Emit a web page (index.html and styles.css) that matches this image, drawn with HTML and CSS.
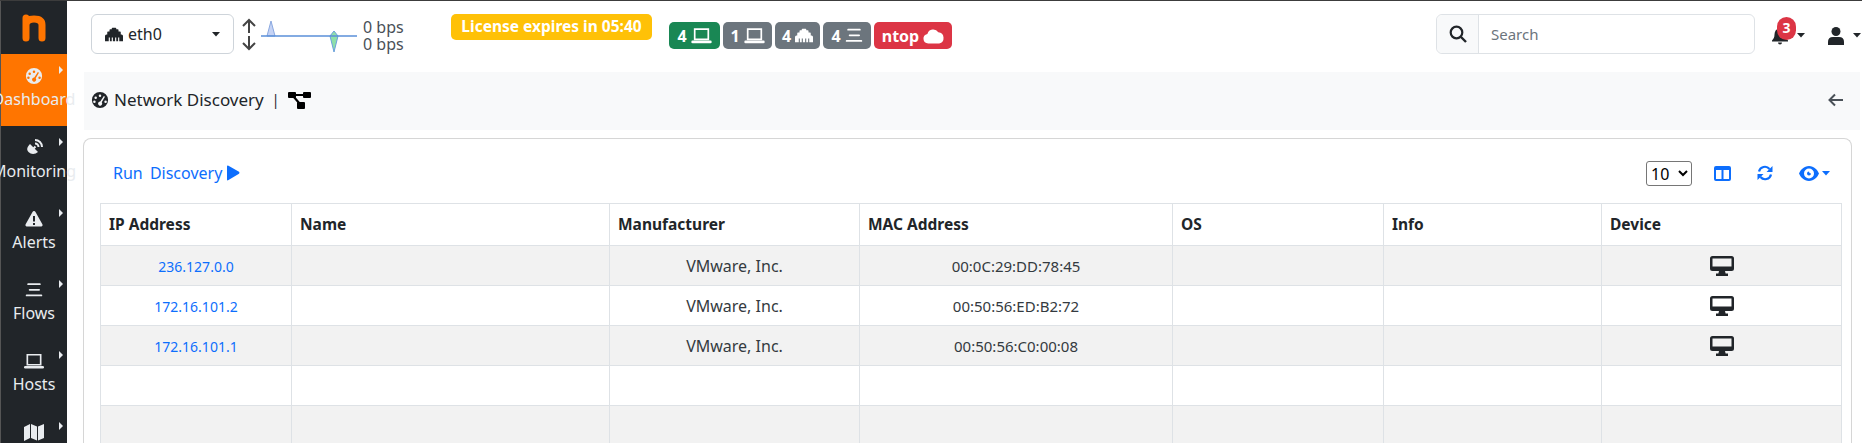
FILE: index.html
```html
<!DOCTYPE html>
<html lang="en">
<head>
    <meta charset="UTF-8">
    <meta name="viewport" content="width=device-width, initial-scale=1.0">
    <title>Network Discovery</title>
    <link rel="stylesheet" href="styles.css">
</head>
<body>
    <!-- Shared icons -->
    <svg class="defs" aria-hidden="true">
        <symbol id="i-laptop" viewBox="0 0 24 20">
            <path d="M4 2.500h16v12H4z" fill="none" stroke="currentColor" stroke-width="2"/>
            <rect x="0" y="16" width="24" height="3" rx="1.500" fill="currentColor"/>
        </symbol>
        <symbol id="i-ethernet" viewBox="0 0 24 20">
            <path d="M0 19v-7q0-2 2-2h1V7q0-1 1-1h2V4q0-1 1-1h2V2q0-1 1-1h4q1 0 1 1v1h2q1 0 1 1v2h2q1 0 1 1v3h1q2 0 2 2v7zM5 14v5h1.500v-5zM9 14v5h1.500v-5zM13.500 14v5H15v-5zM17.500 14v5H19v-5z" fill="currentColor" fill-rule="evenodd"/>
        </symbol>
        <symbol id="i-bars" viewBox="0 0 24 20">
            <rect x="3" y="1" width="18" height="2.400" rx="1.200" fill="currentColor"/>
            <rect x="5" y="8.500" width="15" height="2.400" rx="1.200" fill="currentColor"/>
            <rect x="1" y="16" width="22" height="2.400" rx="1.200" fill="currentColor"/>
        </symbol>
        <symbol id="i-cloud" viewBox="0 0 24 18">
            <path d="M6 17.500a5.500 5.500 0 0 1-1-10.900A7 7 0 0 1 17.500 4.700 6.500 6.500 0 0 1 18.500 17.500z" fill="currentColor"/>
        </symbol>
        <symbol id="i-gauge" viewBox="0 0 20 20">
            <path d="M10 1a9 9 0 1 0 0 18 9 9 0 0 0 0-18zM10 4a1.400 1.400 0 1 1 0 2.800A1.400 1.400 0 0 1 10 4zM5.200 6a1.400 1.400 0 1 1 0 2.800 1.400 1.400 0 0 1 0-2.800zM3.800 10.500a1.400 1.400 0 1 1 0 2.800 1.400 1.400 0 0 1 0-2.800zM16.200 10.500a1.400 1.400 0 1 1 0 2.800 1.400 1.400 0 0 1 0-2.800zM14.300 5.500l1.200.8-3.600 6.200a2.300 2.300 0 1 1-1.600-.8z" fill="currentColor" fill-rule="evenodd"/>
        </symbol>
        <symbol id="i-desktop" viewBox="0 0 24 20">
            <path d="M2.500 0h19A2.500 2.500 0 0 1 24 2.500v10a2.500 2.500 0 0 1-2.500 2.500H15l.6 2.500H18V20H6v-2.500h2.400L9 15H2.500A2.500 2.500 0 0 1 0 12.500v-10A2.500 2.500 0 0 1 2.500 0zM2.500 2.500v8h19v-8z" fill="currentColor" fill-rule="evenodd"/>
        </symbol>
        <symbol id="i-caret" viewBox="0 0 10 6">
            <path d="M0 0h10L5 5.500z" fill="currentColor"/>
        </symbol>
    </svg>

    <div class="layout">
        <!-- Sidebar -->
        <nav class="sidebar">
            <div class="logo">
                <svg width="26" height="28" viewBox="0 0 26 28"><path d="M5 4v20M5 11q0-6 8-6t8 6v13" fill="none" stroke="#ff7500" stroke-width="7" stroke-linecap="round"/></svg>
            </div>
            <a class="nav-item active">
                <svg class="nav-icon" width="18" height="18"><use href="#i-gauge"/></svg>
                <span>Dashboard</span>
            </a>
            <a class="nav-item">
                <svg class="nav-icon" width="18" height="18" viewBox="0 0 18 18"><path d="M5 5l8 8c-3 2.500-7 2.500-9.500 0S2.500 7.500 5 5z" fill="currentColor"/><path d="M8.500 9.500l2-2" stroke="currentColor" stroke-width="2"/><path d="M10 4.500a3.500 3.500 0 0 1 3.500 3.500M10 1a7 7 0 0 1 7 7" fill="none" stroke="currentColor" stroke-width="2"/></svg>
                <span>Monitoring</span>
            </a>
            <a class="nav-item">
                <svg class="nav-icon" width="18" height="18" viewBox="0 0 18 18"><path d="M9 1q1 0 1.500 1l7 12.500q.5 1.500-1 2H1.500q-1.500-.5-1-2l7-12.500Q8 1 9 1zM8 6v5.500h2V6zM8 13v2h2v-2z" fill="currentColor" fill-rule="evenodd"/></svg>
                <span>Alerts</span>
            </a>
            <a class="nav-item">
                <svg class="nav-icon" width="18" height="18"><use href="#i-bars"/></svg>
                <span>Flows</span>
            </a>
            <a class="nav-item">
                <svg class="nav-icon" width="20" height="18"><use href="#i-laptop"/></svg>
                <span>Hosts</span>
            </a>
            <a class="nav-item partial">
                <svg class="nav-icon" width="20" height="18" viewBox="0 0 20 18"><path d="M0 4l6-3v14l-6 3zM7 1l6 2.500v14L7 15zM14 3.500L20 1v14l-6 2.500z" fill="currentColor"/></svg>
            </a>
        </nav>

        <div class="main">
            <!-- Top bar -->
            <header class="topbar">
                <div class="iface-select">
                    <svg width="18" height="15"><use href="#i-ethernet"/></svg>
                    <span class="iface-name">eth0</span>
                    <svg class="iface-caret" width="8" height="5"><use href="#i-caret"/></svg>
                </div>
                <svg class="updown" width="16" height="33" viewBox="0 0 16 33"><path d="M8 15V2M2 8l6-6 6 6M8 18v13M2 25l6 6 6-6" fill="none" stroke="#444" stroke-width="2"/></svg>
                <svg class="spark" width="96" height="34" viewBox="0 0 96 34">
                    <path d="M6 16L10 1l4 15z" fill="#c5d3f5" stroke="#8aa8e0"/>
                    <path d="M69 16l4-5 4 5-4 16z" fill="#8fe0a8" stroke="#6a9fdc"/>
                    <path d="M0 16h96" stroke="#5a8fd8" stroke-width="1.500"/>
                </svg>
                <div class="bps"><div>0 bps</div><div>0 bps</div></div>
                <div class="license">License expires in 05:40</div>
                <div class="badges">
                    <span class="badge green">4 <svg width="21" height="17"><use href="#i-laptop"/></svg></span>
                    <span class="badge gray">1 <svg width="21" height="17"><use href="#i-laptop"/></svg></span>
                    <span class="badge gray">4 <svg width="18" height="15"><use href="#i-ethernet"/></svg></span>
                    <span class="badge gray">4 <svg width="18" height="15"><use href="#i-bars"/></svg></span>
                    <span class="badge red">ntop <svg width="21" height="16"><use href="#i-cloud"/></svg></span>
                </div>
                <div class="search">
                    <div class="search-addon">
                        <svg width="18" height="18" viewBox="0 0 18 18"><circle cx="7.500" cy="7.500" r="5.800" fill="none" stroke="#212529" stroke-width="2.200"/><path d="M12 12l5 5" stroke="#212529" stroke-width="2.400"/></svg>
                    </div>
                    <div class="search-input">Search</div>
                </div>
                <div class="bell">
                    <svg width="16" height="18" viewBox="0 0 16 18"><path d="M8 0q1 0 1 1.200C12 2 13.500 4.500 13.500 7.500c0 3 1 4.500 2.500 6v1H0v-1C1.500 12 2.500 10.500 2.500 7.500 2.500 4.500 4 2 7 1.200 7 0 8 0 8 0zM6 15.500h4a2 2 0 0 1-4 0z" fill="#212529"/></svg>
                    <span class="bell-count">3</span>
                    <svg width="8" height="5"><use href="#i-caret"/></svg>
                </div>
                <div class="user">
                    <svg width="16" height="18" viewBox="0 0 16 18"><circle cx="8" cy="4.500" r="4.500" fill="#212529"/><path d="M0 18v-3q0-5 5-5h6q5 0 5 5v3z" fill="#212529"/></svg>
                    <svg width="8" height="5"><use href="#i-caret"/></svg>
                </div>
            </header>

            <!-- Breadcrumb -->
            <div class="crumb">
                <svg class="crumb-gauge" width="18" height="18"><use href="#i-gauge"/></svg>
                <span class="crumb-title">Network Discovery</span>
                <span class="crumb-sep">|</span>
                <svg width="23" height="18" viewBox="0 0 23 18"><rect x="0" y="1" width="8" height="6" rx="1"/><rect x="15" y="1" width="8" height="6" rx="1"/><rect x="9" y="11" width="8" height="7" rx="1"/><path d="M6 4h11M5 5l7 8" stroke="#000" stroke-width="2.200"/></svg>
                <svg class="crumb-back" width="16" height="14" viewBox="0 0 16 14"><path d="M15 7H2M7 1.500L1.500 7 7 12.500" fill="none" stroke="#495057" stroke-width="2"/></svg>
            </div>

            <!-- Discovery table -->
            <section class="card">
                <div class="toolbar">
                    <a class="run-link">Run Discovery <svg width="14" height="16" viewBox="0 0 14 16"><path d="M1 1.500Q1 0 2.500.8l10.500 6q1 1 0 2L2.500 15Q1 16 1 14.500z" fill="#0d6efd"/></svg></a>
                    <div class="tools">
                        <select class="page-size"><option>10</option></select>
                        <svg width="17" height="15" viewBox="0 0 17 15"><path d="M2 0h13a2 2 0 0 1 2 2v11a2 2 0 0 1-2 2H2a2 2 0 0 1-2-2V2a2 2 0 0 1 2-2zM2 4v9h5.500V4zM9.500 4v9H15V4z" fill="#0d6efd" fill-rule="evenodd"/></svg>
                        <svg width="16" height="16" viewBox="0 0 16 16"><path d="M2 6.500A6 6 0 0 1 12.500 4M14 9.500A6 6 0 0 1 3.500 12" fill="none" stroke="#0d6efd" stroke-width="2.200"/><path d="M15.500 1v6h-6zM.5 15V9h6z" fill="#0d6efd"/></svg>
                        <div class="eye">
                            <svg width="20" height="15" viewBox="0 0 20 15"><path d="M10 0c5 0 8.500 4 10 7.500C18.500 11 15 15 10 15S1.500 11 0 7.500C1.500 4 5 0 10 0zM10 2.500a5 5 0 1 0 0 10 5 5 0 0 0 0-10zM10 5.500a2 2 0 0 0 2 2 2 2 0 1 1-2-2z" fill="#0d6efd" fill-rule="evenodd"/></svg>
                            <svg width="8" height="5"><use href="#i-caret"/></svg>
                        </div>
                    </div>
                </div>
                <table class="hosts">
                    <thead>
                        <tr>
                            <th class="c-ip">IP Address</th>
                            <th class="c-name">Name</th>
                            <th class="c-man">Manufacturer</th>
                            <th class="c-mac">MAC Address</th>
                            <th class="c-os">OS</th>
                            <th class="c-info">Info</th>
                            <th>Device</th>
                        </tr>
                    </thead>
                    <tbody>
                        <tr>
                            <td><a>236.127.0.0</a></td><td></td><td class="maker">VMware, Inc.</td><td>00:0C:29:DD:78:45</td><td></td><td></td>
                            <td><svg width="24" height="20"><use href="#i-desktop"/></svg></td>
                        </tr>
                        <tr>
                            <td><a>172.16.101.2</a></td><td></td><td class="maker">VMware, Inc.</td><td>00:50:56:ED:B2:72</td><td></td><td></td>
                            <td><svg width="24" height="20"><use href="#i-desktop"/></svg></td>
                        </tr>
                        <tr>
                            <td><a>172.16.101.1</a></td><td></td><td class="maker">VMware, Inc.</td><td>00:50:56:C0:00:08</td><td></td><td></td>
                            <td><svg width="24" height="20"><use href="#i-desktop"/></svg></td>
                        </tr>
                        <tr><td></td><td></td><td></td><td></td><td></td><td></td><td></td></tr>
                        <tr class="last-row"><td></td><td></td><td></td><td></td><td></td><td></td><td></td></tr>
                    </tbody>
                </table>
            </section>
        </div>
    </div>
</body>
</html>
```

FILE: styles.css
```css
/* Basic Reset */
* {
    box-sizing: border-box;
    margin: 0;
    padding: 0;
}

html, body {
    height: 100%;
    overflow: hidden;
}

body {
    font-family: "Noto Sans", sans-serif;
    font-size: 16px;
    color: #212529;
    background-color: #fff;
    border-top: 1px solid #3c3c3c;
}

.defs {
    display: none;
}

.layout {
    display: flex;
    height: 100%;
}

/* Sidebar */
.sidebar {
    width: 67px;
    flex-shrink: 0;
    background-color: #212529;
    border-left: 1px solid #555;
    display: flex;
    flex-direction: column;
    color: #e9ecef;
}

.logo {
    height: 53px;
    flex-shrink: 0;
    display: flex;
    justify-content: center;
    align-items: center;
}

.nav-item {
    position: relative;
    height: 71px;
    flex-shrink: 0;
    display: flex;
    flex-direction: column;
    align-items: center;
    padding-top: 13px;
    white-space: nowrap;
    line-height: 20px;
}

.nav-item.active {
    background-color: #ff7500;
    height: 72px;
}

.nav-item.partial {
    height: 33px;
    overflow: hidden;
}

.nav-item::after {
    content: "";
    position: absolute;
    top: 12px;
    right: 4px;
    border-left: 4px solid #e9ecef;
    border-top: 4px solid transparent;
    border-bottom: 4px solid transparent;
}

.nav-icon {
    margin-bottom: 4px;
    flex-shrink: 0;
}

/* Top bar */
.main {
    flex: 1;
    min-width: 0;
}

.topbar {
    height: 71px;
    padding: 13px 1px 0 24px;
    display: flex;
    align-items: flex-start;
}

.iface-select {
    width: 143px;
    height: 40px;
    border: 1px solid #ced4da;
    border-radius: 6px;
    display: flex;
    align-items: center;
    padding: 0 13px;
    gap: 5px;
}

.iface-name {
    flex: 1;
}

.updown {
    margin: 4px 0 0 7px;
}

.spark {
    margin: 6px 0 0 4px;
}

.bps {
    margin: 5px 0 0 6px;
    line-height: 17px;
    color: #495057;
    width: 88px;
}

.license {
    height: 26px;
    width: 201px;
    background-color: #ffc107;
    border-radius: 5px;
    color: #fff;
    font-weight: 700;
    font-size: 15.5px;
    line-height: 25px;
    text-align: center;
}

.badges {
    display: flex;
    gap: 3px;
    margin: 8px 0 0 17px;
}

.badge {
    height: 27px;
    width: 45px;
    border-radius: 5px;
    color: #fff;
    font-weight: 700;
    display: flex;
    align-items: center;
    justify-content: center;
    gap: 4px;
}

.badge.green {
    background-color: #198754;
    width: 51px;
}

.badge.gray {
    background-color: #6c757d;
}

.badge.gray:nth-child(2) {
    width: 49px;
}

.badge.gray:nth-child(4) {
    width: 48px;
}

.badge.red {
    background-color: #dc3545;
    width: 78px;
}

.search {
    margin-left: auto;
    width: 319px;
    height: 40px;
    border: 1px solid #dee2e6;
    border-radius: 6px;
    display: flex;
}

.search-addon {
    width: 42px;
    background-color: #f8f9fa;
    border-right: 1px solid #dee2e6;
    border-radius: 6px 0 0 6px;
    display: flex;
    align-items: center;
    justify-content: center;
}

.search-input {
    padding-left: 12px;
    line-height: 38px;
    font-size: 15px;
    color: #6c757d;
}

.bell {
    position: relative;
    width: 56px;
    height: 40px;
    margin-left: 17px;
    display: flex;
    align-items: center;
    padding-top: 3px;
    gap: 9px;
}

.bell-count {
    position: absolute;
    left: 5px;
    top: 3px;
    width: 19px;
    height: 23px;
    border-radius: 10px;
    background-color: #dc3545;
    color: #fff;
    font-size: 14px;
    font-weight: 700;
    line-height: 22px;
    text-align: center;
}

.user {
    height: 40px;
    display: flex;
    align-items: center;
    padding-top: 3px;
    gap: 9px;
}

/* Breadcrumb */
.crumb {
    height: 58px;
    margin-left: 17px;
    margin-right: 2px;
    background-color: #f8f9fa;
    display: flex;
    align-items: center;
    padding: 0 16px 3px 7px;
}

.crumb-title {
    margin-left: 5px;
    font-size: 17px;
}

.crumb-sep {
    margin: 0 8px;
    font-size: 14px;
}

.crumb-back {
    margin-left: auto;
}

/* Card and table */
.card {
    margin: 8px 10px 0 16px;
    padding: 0 9px 0 16px;
    height: 305px;
    border: 1px solid #d6d6d6;
    border-bottom: none;
    border-radius: 8px 8px 0 0;
}

.toolbar {
    height: 64px;
    display: flex;
    align-items: center;
    padding-top: 4px;
}

.run-link {
    margin-left: 13px;
    color: #0d6efd;
    display: flex;
    align-items: center;
    gap: 4px;
    word-spacing: 3px;
}

.tools {
    margin-left: auto;
    display: flex;
    align-items: center;
    gap: 26px;
    padding-right: 12px;
}

.page-size {
    width: 46px;
    height: 25px;
    font-family: "Noto Sans", sans-serif;
    font-size: 16px;
    background-color: #fff;
    border: 1px solid #767676;
    border-radius: 3px;
    margin-right: -4px;
}

.eye {
    display: flex;
    align-items: center;
    gap: 3px;
    color: #0d6efd;
}

.hosts {
    width: 1742px;
    table-layout: fixed;
    border-collapse: collapse;
    border-top: 1px solid #dee2e6;
    border-left: 1px solid #dee2e6;
    border-right: 1px solid #dee2e6;
}

.hosts th {
    height: 42px;
    text-align: left;
    padding: 0 8px 2px;
    font-size: 15.5px;
    font-weight: 700;
    border: 1px solid #dee2e6;
}

.hosts td {
    height: 40px;
    text-align: center;
    border: 1px solid #dee2e6;
    font-size: 15px;
    color: #343a40;
}

.hosts .last-row td {
    height: 37px;
    border-bottom: none;
}

.hosts td.maker {
    font-size: 16px;
}

.hosts td svg {
    display: block;
    margin: 0 auto;
    color: #212529;
}

.hosts tbody tr:nth-child(odd) {
    background-color: #f2f2f2;
}

.hosts a {
    color: #0d6efd;
    font-size: 14px;
}

.c-ip {
    width: 191px;
}

.c-name {
    width: 318px;
}

.c-man {
    width: 250px;
}

.c-mac {
    width: 313px;
}

.c-os {
    width: 211px;
}

.c-info {
    width: 218px;
}
```
